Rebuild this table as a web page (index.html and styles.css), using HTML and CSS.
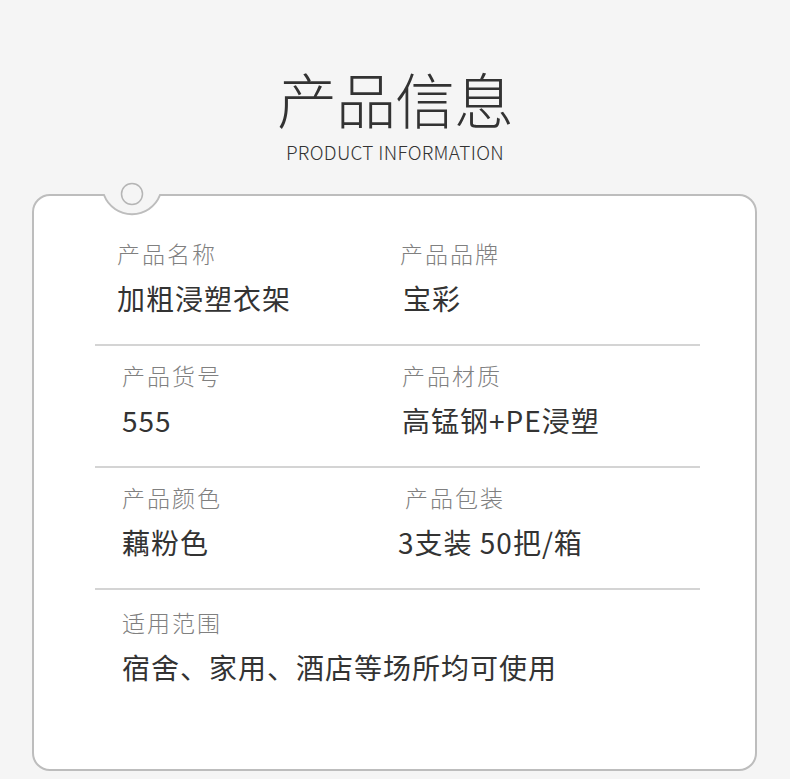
FILE: index.html
```html
<!doctype html>
<html>

<head>
    <meta charset="utf-8">
    <title>产品信息</title>
    <link rel="stylesheet" href="styles.css">
</head>

<body>
<!--Heading-->
<div class="headings">
    <h1>产品信息</h1>
    <p>PRODUCT INFORMATION</p>
</div>

<!--Info card-->
<div class="infoCard">
    <!--Hanger hole at the top edge-->
    <svg class="notch" width="62" height="36" viewBox="0 0 62 36">
        <path d="M0 10 H62 V14 H59 A30 30 0 0 1 3 14 H0 Z" fill="#f5f5f5"/>
        <path d="M0 13 H3 A30 30 0 0 0 59 13 H62" fill="none" stroke="#bdbdbd" stroke-width="2"/>
        <circle cx="31" cy="12" r="10.5" fill="none" stroke="#b5b5b5" stroke-width="1.5"/>
    </svg>

    <div class="row first">
        <div class="cell">
            <div class="label">产品名称</div>
            <div class="value">加粗浸塑衣架</div>
        </div>
        <div class="cell">
            <div class="label">产品品牌</div>
            <div class="value shift">宝彩</div>
        </div>
    </div>
    <div class="row">
        <div class="cell">
            <div class="label">产品货号</div>
            <div class="value">555</div>
        </div>
        <div class="cell">
            <div class="label">产品材质</div>
            <div class="value">高锰钢+PE浸塑</div>
        </div>
    </div>
    <div class="row">
        <div class="cell">
            <div class="label">产品颜色</div>
            <div class="value">藕粉色</div>
        </div>
        <div class="cell">
            <div class="label shift">产品包装</div>
            <div class="value back">3支装 50把/箱</div>
        </div>
    </div>
    <div class="row last">
        <div class="cell">
            <div class="label">适用范围</div>
            <div class="value">宿舍、家用、酒店等场所均可使用</div>
        </div>
    </div>
</div>
</body>

</html>
```

FILE: styles.css
```css
body{margin:0; background-color:#f5f5f5; font-family:"Noto Sans CJK SC", "Noto Sans", sans-serif; color:#333;}
/*Heading*/
.headings{text-align:center; padding-top:70px;}
.headings h1{margin:0; font-size:60px; line-height:56px; font-weight:300; letter-spacing:-1px;}
.headings p{margin:14px 0 0; font-size:19px; line-height:24px; font-weight:300; letter-spacing:0.3px;}
/*Card*/
.infoCard{position:relative; margin:30px 33px 0 32px; height:577px; box-sizing:border-box; background-color:#fff; border:2px solid #bdbdbd; border-radius:18px; padding:28px 55px 0 61px;}
.notch{position:absolute; left:67px; top:-14px;}
/*Rows*/
.row{display:grid; grid-template-columns:280px 1fr; padding:14px 0 28px 27px; border-bottom:2px solid #d4d4d4;}
.row.first{padding-left:22px; grid-template-columns:283px 1fr;}
.row.last{border-bottom:none; grid-template-columns:1fr; padding-top:17px;}
.label{font-size:23px; line-height:30px; letter-spacing:2px; color:#808080; font-weight:300;}
.value{margin-top:12px; font-size:28px; line-height:36px; letter-spacing:1px;}
.shift{margin-left:3px;}
.back{margin-left:-4px;}
```
